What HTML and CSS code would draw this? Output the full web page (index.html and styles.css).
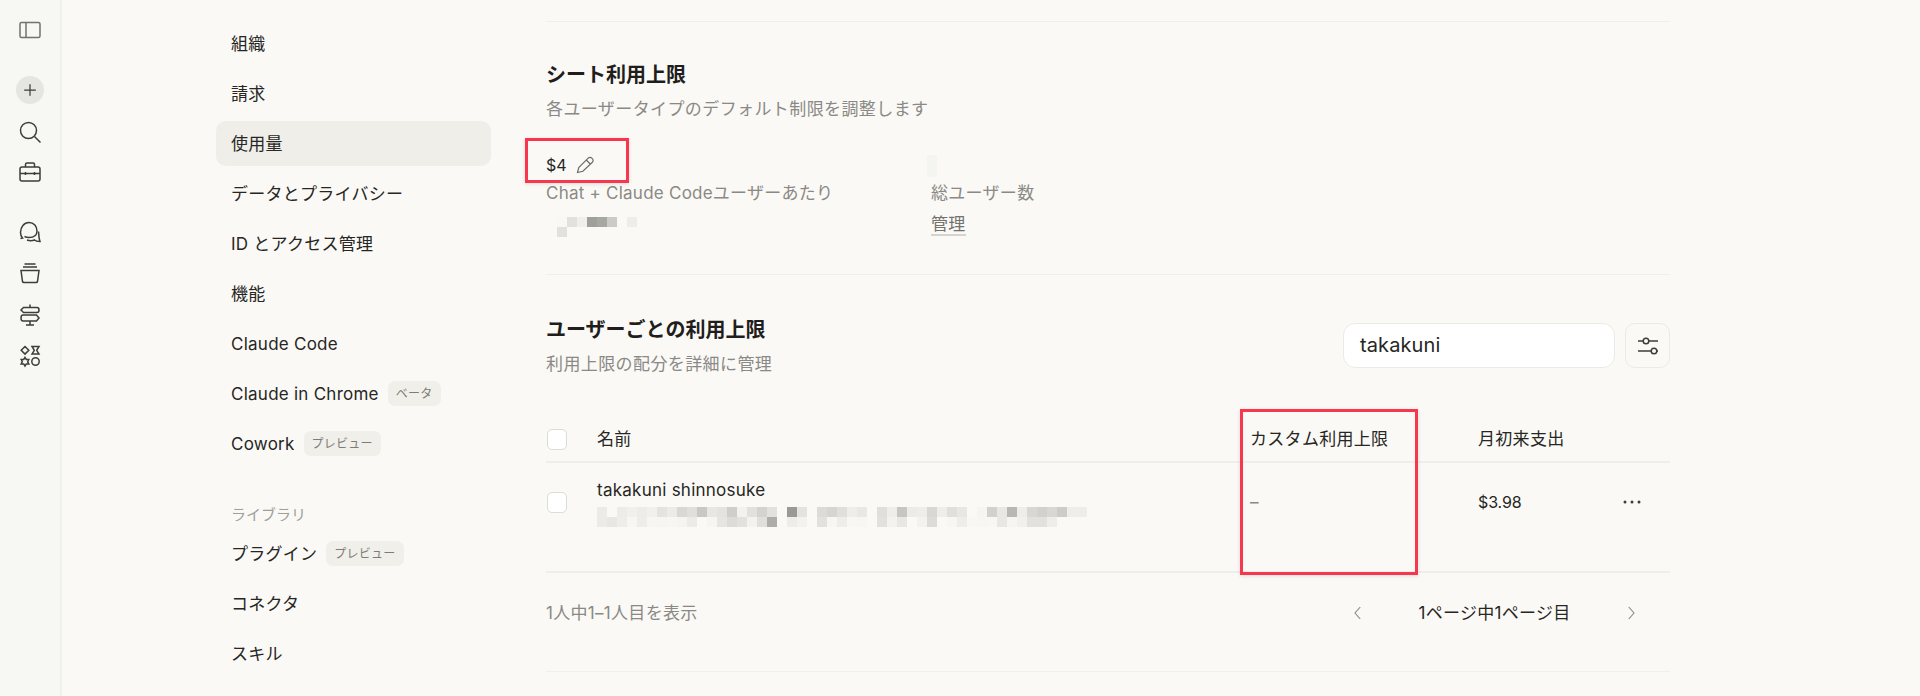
FILE: index.html
```html
<!DOCTYPE html>
<html lang="ja">
<head>
  <meta charset="utf-8">
  <title>使用量</title>
  <link rel="stylesheet" href="styles.css">
</head>
<body>
  <div class="page">
    <aside class="rail">
      <svg class="icon rail-panel" viewBox="0 0 24 24"><rect x="2" y="4.500" width="20" height="15" rx="1.500"/><path d="M8 4.500v15"/></svg>
      <div class="rail-new"><svg class="icon" viewBox="0 0 24 24"><path d="M12 5v14M5 12h14"/></svg></div>
      <svg class="icon rail-search" viewBox="0 0 24 24"><circle cx="10.500" cy="10.500" r="8"/><path d="M16.500 16.500l6 6"/></svg>
      <svg class="icon rail-tool" viewBox="0 0 24 24"><rect x="2" y="7" width="20" height="14" rx="2"/><path d="M7.500 7V4.500q0-1.500 1.500-1.500h6q1.500 0 1.500 1.500V7M2 13.500h20M7.500 12v3M16.500 12v3"/></svg>
      <svg class="icon rail-chat" viewBox="0 0 24 24"><path d="M2.500 18.500l2-.5C3 16.500 2.500 14.500 2.500 12.500 2.500 7 6 2.500 11 2.500s8 4 8 8.500-3.500 6.500-8 6.500c-1.500 0-3-.3-4.500-1"/><path d="M20.500 11.500c.5 3 0 6 1.500 10-2.500 0-4.500-.5-5.500-1.500-2.500 1-5 1-7.500 0"/></svg>
      <svg class="icon rail-stack" viewBox="0 0 24 24"><path d="M6.500 3h11M5 6h14M3 9.500h18l-1.500 11q-.2 1-1.500 1H6q-1.300 0-1.500-1z"/></svg>
      <svg class="icon rail-sign" viewBox="0 0 24 24"><path d="M12 1.500v3M12 18v4M8 22h8M5.500 4.500H19q2 0 2 2.500t-2 2.500H5.500L3 7zM18.500 12H5q-2 0-2 3t2 3h13.500l2.500-3z"/></svg>
      <svg class="icon rail-shape" viewBox="0 0 24 24"><path d="M7 2.500l3.800 3.800L7 10.100 3.200 6.300zM14 2.500h7l-2.300 3.800 2.300 3.800h-7l2.300-3.800z"/><circle cx="17.500" cy="17.500" r="3.700"/><path d="M7 13.500l1.300 2h2.500L9.700 17.700l1.100 2.200H8.300L7 22l-1.300-2.100H3.200l1.100-2.200-1.100-2.200h2.500z"/></svg>
    </aside>

    <nav class="side-nav">
      <a class="nav-item">組織</a>
      <a class="nav-item">請求</a>
      <a class="nav-item active">使用量</a>
      <a class="nav-item">データとプライバシー</a>
      <a class="nav-item">ID とアクセス管理</a>
      <a class="nav-item">機能</a>
      <a class="nav-item">Claude Code</a>
      <a class="nav-item">Claude in Chrome <span class="pill">ベータ</span></a>
      <a class="nav-item">Cowork <span class="pill">プレビュー</span></a>
      <div class="nav-label">ライブラリ</div>
      <a class="nav-item">プラグイン <span class="pill">プレビュー</span></a>
      <a class="nav-item">コネクタ</a>
      <a class="nav-item">スキル</a>
    </nav>

    <main class="content">
      <section class="seat-limit">
        <h2>シート利用上限</h2>
        <p class="sub">各ユーザータイプのデフォルト制限を調整します</p>
        <div class="stats">
          <div class="stat-one">
            <div class="stat-value">$4
              <svg class="icon pencil" viewBox="0 0 24 24"><path d="M3 21l1.500-6L15.500 4q2.500-2.500 5 0t0 5L9.500 19.500zM13.500 6l4.500 4.500"/></svg>
            </div>
            <div class="stat-label">Chat + Claude Codeユーザーあたり</div>
            <svg class="mosaic" width="80" height="20">
              <rect x="0" y="0" width="10" height="10" fill="#f8f8f5"/><rect x="10" y="0" width="10" height="10" fill="#e2e1dd"/><rect x="20" y="0" width="10" height="10" fill="#f0efeb"/><rect x="30" y="0" width="10" height="10" fill="#a0a09a"/><rect x="40" y="0" width="10" height="10" fill="#a8a8a2"/><rect x="50" y="0" width="10" height="10" fill="#cccbc6"/><rect x="70" y="0" width="10" height="10" fill="#eeede9"/><rect x="0" y="10" width="10" height="10" fill="#e2e1dd"/>
            </svg>
          </div>
          <div class="stat-two">
            <div class="pale-block"></div>
            <div class="stat-label">総ユーザー数</div>
            <a class="manage">管理</a>
          </div>
        </div>
      </section>

      <section class="user-limit">
        <div class="user-head">
          <div>
            <h2>ユーザーごとの利用上限</h2>
            <p class="sub">利用上限の配分を詳細に管理</p>
          </div>
          <div class="tools">
            <div class="search">takakuni</div>
            <div class="filter">
              <svg class="icon" viewBox="0 0 24 24"><path d="M2 7h5M13 7h9M2 17h13M21 17h1"/><circle cx="10" cy="7" r="2.800"/><circle cx="18" cy="17" r="2.800"/></svg>
            </div>
          </div>
        </div>

        <div class="table-row table-header">
          <span class="check"></span>
          <span>名前</span>
          <span>カスタム利用上限</span>
          <span>月初来支出</span>
          <span></span>
        </div>
        <div class="table-row table-body">
          <span class="check"></span>
          <div>
            <div class="user-name">takakuni shinnosuke</div>
            <svg class="mosaic" width="490" height="20">
              <rect x="0" y="0" width="10" height="10" fill="#ecebe7"/><rect x="20" y="0" width="10" height="10" fill="#edece8"/><rect x="30" y="0" width="10" height="10" fill="#f1f0ec"/><rect x="40" y="0" width="10" height="10" fill="#edece8"/><rect x="50" y="0" width="10" height="10" fill="#f1f0ec"/><rect x="60" y="0" width="10" height="10" fill="#e4e3df"/><rect x="70" y="0" width="10" height="10" fill="#ecebe7"/><rect x="80" y="0" width="10" height="10" fill="#d9d8d4"/><rect x="90" y="0" width="10" height="10" fill="#e0dfdb"/><rect x="100" y="0" width="10" height="10" fill="#c9c8c4"/><rect x="110" y="0" width="10" height="10" fill="#e8e7e3"/><rect x="120" y="0" width="10" height="10" fill="#e4e3df"/><rect x="130" y="0" width="10" height="10" fill="#cfcec9"/><rect x="140" y="0" width="10" height="10" fill="#f3f2ee"/><rect x="150" y="0" width="10" height="10" fill="#e2e1dd"/><rect x="160" y="0" width="10" height="10" fill="#d4d3cf"/><rect x="170" y="0" width="10" height="10" fill="#e2e1dd"/><rect x="190" y="0" width="10" height="10" fill="#9a9a94"/><rect x="200" y="0" width="10" height="10" fill="#e4e3df"/><rect x="220" y="0" width="10" height="10" fill="#dcdbd7"/><rect x="230" y="0" width="10" height="10" fill="#d6d5d1"/><rect x="240" y="0" width="10" height="10" fill="#e0dfdb"/><rect x="250" y="0" width="10" height="10" fill="#eeede9"/><rect x="260" y="0" width="10" height="10" fill="#e9e8e4"/><rect x="280" y="0" width="10" height="10" fill="#e0dfdb"/><rect x="290" y="0" width="10" height="10" fill="#eeede9"/><rect x="300" y="0" width="10" height="10" fill="#c6c7c2"/><rect x="310" y="0" width="10" height="10" fill="#ecebe7"/><rect x="320" y="0" width="10" height="10" fill="#eeede9"/><rect x="330" y="0" width="10" height="10" fill="#d8d7d3"/><rect x="340" y="0" width="10" height="10" fill="#eeede9"/><rect x="350" y="0" width="10" height="10" fill="#e0dfdb"/><rect x="360" y="0" width="10" height="10" fill="#e8e7e3"/><rect x="380" y="0" width="10" height="10" fill="#f6f5f1"/><rect x="390" y="0" width="10" height="10" fill="#d2d1cd"/><rect x="400" y="0" width="10" height="10" fill="#e8e7e3"/><rect x="410" y="0" width="10" height="10" fill="#b8b8b3"/><rect x="420" y="0" width="10" height="10" fill="#eeede9"/><rect x="430" y="0" width="10" height="10" fill="#d8d7d3"/><rect x="440" y="0" width="10" height="10" fill="#d2d1cd"/><rect x="450" y="0" width="10" height="10" fill="#d8d7d3"/><rect x="460" y="0" width="10" height="10" fill="#cdccc8"/><rect x="470" y="0" width="10" height="10" fill="#eeede9"/><rect x="480" y="0" width="10" height="10" fill="#eeede9"/>
              <rect x="0" y="10" width="10" height="10" fill="#ecebe7"/><rect x="10" y="10" width="10" height="10" fill="#e8e7e3"/><rect x="20" y="10" width="10" height="10" fill="#eeede9"/><rect x="30" y="10" width="10" height="10" fill="#f7f6f2"/><rect x="40" y="10" width="10" height="10" fill="#eeede9"/><rect x="50" y="10" width="10" height="10" fill="#f7f6f2"/><rect x="60" y="10" width="10" height="10" fill="#f6f5f1"/><rect x="70" y="10" width="10" height="10" fill="#f7f6f2"/><rect x="80" y="10" width="10" height="10" fill="#f5f4f0"/><rect x="90" y="10" width="10" height="10" fill="#ecebe7"/><rect x="110" y="10" width="10" height="10" fill="#f6f5f1"/><rect x="120" y="10" width="10" height="10" fill="#e6e5e1"/><rect x="130" y="10" width="10" height="10" fill="#dcdbd7"/><rect x="140" y="10" width="10" height="10" fill="#e2e1dd"/><rect x="150" y="10" width="10" height="10" fill="#f3f2ee"/><rect x="160" y="10" width="10" height="10" fill="#e0dfdb"/><rect x="170" y="10" width="10" height="10" fill="#aeaea8"/><rect x="190" y="10" width="10" height="10" fill="#eeede9"/><rect x="200" y="10" width="10" height="10" fill="#f3f2ee"/><rect x="220" y="10" width="10" height="10" fill="#e2e1dd"/><rect x="230" y="10" width="10" height="10" fill="#f7f6f2"/><rect x="240" y="10" width="10" height="10" fill="#eeede9"/><rect x="250" y="10" width="10" height="10" fill="#f8f7f3"/><rect x="260" y="10" width="10" height="10" fill="#f7f6f2"/><rect x="280" y="10" width="10" height="10" fill="#e2e1dd"/><rect x="290" y="10" width="10" height="10" fill="#f3f2ee"/><rect x="300" y="10" width="10" height="10" fill="#e8e7e3"/><rect x="320" y="10" width="10" height="10" fill="#f3f2ee"/><rect x="330" y="10" width="10" height="10" fill="#dcdbd7"/><rect x="350" y="10" width="10" height="10" fill="#f7f6f2"/><rect x="360" y="10" width="10" height="10" fill="#eeede9"/><rect x="370" y="10" width="10" height="10" fill="#f8f7f3"/><rect x="380" y="10" width="10" height="10" fill="#f7f6f2"/><rect x="390" y="10" width="10" height="10" fill="#f8f7f3"/><rect x="400" y="10" width="10" height="10" fill="#e8e7e3"/><rect x="410" y="10" width="10" height="10" fill="#f6f5f1"/><rect x="420" y="10" width="10" height="10" fill="#f1f0ec"/><rect x="430" y="10" width="10" height="10" fill="#e2e1dd"/><rect x="440" y="10" width="10" height="10" fill="#e2e1dd"/><rect x="450" y="10" width="10" height="10" fill="#eeede9"/>
            </svg>
          </div>
          <span class="muted">–</span>
          <span class="amount">$3.98</span>
          <svg class="dots" width="18" height="4" viewBox="0 0 18 4"><circle cx="2" cy="2" r="1.500"/><circle cx="9" cy="2" r="1.500"/><circle cx="16" cy="2" r="1.500"/></svg>
        </div>

        <div class="table-foot">
          <span class="muted">1人中1–1人目を表示</span>
          <div class="pager">
            <svg class="icon chevron" viewBox="0 0 24 24"><path d="M15 4l-7 8 7 8"/></svg>
            <span class="pager-text">1ページ中1ページ目</span>
            <svg class="icon chevron" viewBox="0 0 24 24"><path d="M9 4l7 8-7 8"/></svg>
          </div>
        </div>
      </section>
    </main>

    <!-- 赤枠の注釈 -->
    <div class="mark mark-price"></div>
    <div class="mark mark-column"></div>
  </div>
</body>
</html>
```

FILE: styles.css
```css
* {
  box-sizing: border-box;
}

body {
  margin: 0;
  background-color: #faf9f5;
  color: #262624;
  font-family: Inter, "Noto Sans CJK JP", sans-serif;
  font-size: 17px;
  line-height: 24px;
}

h2 {
  margin: 0;
  font-size: 20px;
  line-height: 26px;
  font-weight: 600;
  letter-spacing: 0;
  color: #1f1e1d;
}

.page {
  position: relative;
  display: flex;
  height: 696px;
  overflow: hidden;
}

.icon {
  display: block;
  width: 24px;
  height: 24px;
  fill: none;
  stroke: #3d3d3a;
  stroke-width: 1.5;
}

.muted {
  color: #8a8985;
}

/* 左端のアイコン列 */
.rail {
  flex: none;
  width: 62px;
  padding-top: 18px;
  border-right: 2px solid #f1f0ec;
  background-color: #f7f7f3;
  display: flex;
  flex-direction: column;
  align-items: center;
}

.rail-panel {
  stroke: #73726e;
}

.rail-new {
  width: 28px;
  height: 28px;
  margin-top: 34px;
  border-radius: 50%;
  background-color: #e6e6e1;
  display: flex;
  align-items: center;
  justify-content: center;
}

.rail-new .icon {
  width: 20px;
  height: 20px;
}

.rail-search {
  margin-top: 16px;
}

.rail-tool {
  margin-top: 16px;
}

.rail-chat {
  margin-top: 36px;
}

.rail-stack {
  margin-top: 17px;
}

.rail-sign {
  margin-top: 18px;
}

.rail-shape {
  margin-top: 17px;
}

/* 設定メニュー */
.side-nav {
  flex: none;
  width: 275px;
  margin-left: 154px;
  padding-top: 21px;
}

.nav-item {
  display: flex;
  align-items: center;
  gap: 9px;
  height: 45px;
  margin-bottom: 5px;
  padding-left: 15px;
  border-radius: 10px;
  letter-spacing: 0.25px;
  white-space: nowrap;
}

.nav-item.active {
  background-color: #f0eee8;
}

.nav-label {
  margin-top: 37px;
  margin-bottom: 4px;
  padding-left: 15px;
  font-size: 15px;
  color: #a0a09b;
}

.pill {
  height: 25px;
  padding: 0 8px;
  border-radius: 7px;
  background-color: #f0efe9;
  color: #7d7c78;
  font-size: 12px;
  line-height: 25px;
}

/* 右側の本文 */
.content {
  flex: none;
  width: 1124px;
  margin-left: 55px;
  padding-top: 21px;
  letter-spacing: 0.3px;
}

.seat-limit {
  height: 253px;
  padding-top: 40px;
  border-top: 1px solid #f0efea;
}

.sub {
  margin: 9px 0 0;
  color: #8a8985;
  letter-spacing: 0.4px;
}

.stats {
  display: flex;
  margin-top: 32px;
}

.stat-one {
  width: 385px;
}

.stat-two {
  margin-top: 2px;
}

.stat-value {
  display: flex;
  align-items: center;
  gap: 8px;
  font-size: 16px;
  letter-spacing: 0;
}

.pencil {
  width: 20px;
  height: 20px;
  stroke: #6b6a66;
  stroke-width: 1.4;
}

.stat-label {
  margin-top: 4px;
  color: #8a8985;
}

.stat-one .stat-label {
  letter-spacing: 0.24px;
}

.mosaic {
  display: block;
  shape-rendering: crispEdges;
}

.stat-one .mosaic {
  margin-top: 12px;
  margin-left: 11px;
}

.pale-block {
  width: 10px;
  height: 22px;
  margin-left: -4px;
  background-color: #f4f4f0;
}

.manage {
  display: inline-block;
  height: 24px;
  margin-top: 7px;
  border-bottom: 2px solid #d5d4cf;
  color: #73726e;
}

.user-limit {
  padding-top: 42px;
  border-top: 1px solid #f0efea;
  border-bottom: 1px solid #f0efea;
  height: 398px;
}

.user-head {
  display: flex;
  justify-content: space-between;
  height: 98px;
}

.tools {
  display: flex;
  gap: 10px;
  margin-top: 6px;
}

.search {
  width: 272px;
  height: 45px;
  padding: 0 16px;
  border: 1px solid #ebeae5;
  border-radius: 12px;
  background-color: #fff;
  font-size: 20px;
  line-height: 43px;
  letter-spacing: 0.1px;
}

.filter {
  width: 45px;
  height: 45px;
  border: 1.5px solid #ebeae5;
  border-radius: 10px;
  display: flex;
  align-items: center;
  justify-content: center;
}

.table-row {
  display: grid;
  grid-template-columns: 51px 653px 228px 153px 39px;
  align-items: center;
  border-bottom: 2px solid #efeee9;
}

.table-header {
  height: 48px;
  padding-top: 2px;
}

.table-body {
  height: 110px;
  padding: 0 0 30px;
}

.user-name {
  margin-bottom: 5px;
  letter-spacing: 0.25px;
}

.amount {
  font-size: 16px;
  letter-spacing: -0.1px;
}

.check {
  width: 20px;
  height: 21px;
  margin-left: 1px;
  border: 1.5px solid #dddcd7;
  border-radius: 5px;
  background-color: #fff;
}

.dots {
  fill: #3d3d3a;
  margin-left: -8px;
}

.table-foot {
  display: flex;
  align-items: center;
  justify-content: space-between;
  height: 80px;
}

.pager {
  display: flex;
  align-items: center;
  width: 291px;
  margin-right: 30px;
}

.pager-text {
  flex: 1;
  text-align: center;
}

.chevron {
  width: 18px;
  height: 18px;
  stroke: #8a8985;
}

/* 赤枠 */
.mark {
  position: absolute;
  border: 3px solid #f8364e;
  box-shadow: 0 1px 4px rgba(0, 0, 0, 0.12);
}

.mark-price {
  left: 525px;
  top: 138px;
  width: 104px;
  height: 45px;
}

.mark-column {
  left: 1240px;
  top: 409px;
  width: 178px;
  height: 166px;
}
```
